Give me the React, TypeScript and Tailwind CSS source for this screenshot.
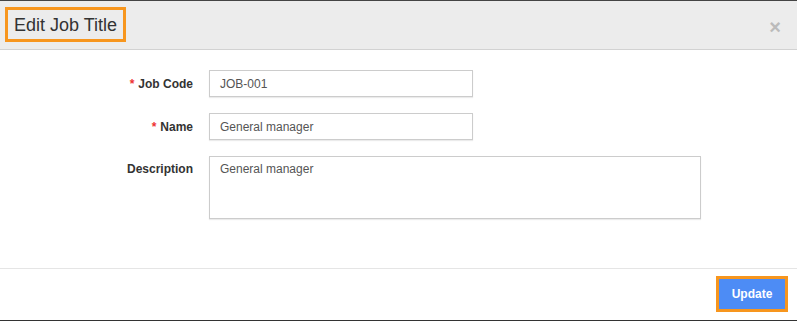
import React from "react";

export default function App() {
  return (
    <div className="w-[797px] h-[321px] bg-white flex flex-col overflow-hidden" style={{ fontFamily: "'Liberation Sans', Arial, sans-serif" }}>
      <div className="h-px bg-[#444]" />
      <div className="h-[49px] bg-[#ececec] border-b border-[#d2d2d2] flex items-start justify-between">
        <div className="mt-[6px] ml-[5px] h-[35px] pl-[6px] pr-[6px] border-[3px] border-[#f7961e] flex items-center">
          <span className="text-[18px] text-[#333] leading-none">Edit Job Title</span>
        </div>
        <div className="mt-[16px] mr-[16px] text-[#bbb] text-[20px] font-bold leading-none">×</div>
      </div>
      <div className="flex-1 flex flex-col gap-[16px] pt-[20px]">
        <div className="flex items-center">
          <div className="w-[193px] text-right text-[12px] font-bold text-[#333]"><span className="text-[#e33] mr-[4px]">*</span>Job Code</div>
          <div className="ml-[16px] w-[264px] h-[27px] border border-[#ccc] shadow-[0_1px_1px_rgba(0,0,0,0.08)] pl-[10px] flex items-center text-[12px] text-[#555]">JOB-001</div>
        </div>
        <div className="flex items-center">
          <div className="w-[193px] text-right text-[12px] font-bold text-[#333]"><span className="text-[#e33] mr-[4px]">*</span>Name</div>
          <div className="ml-[16px] w-[264px] h-[27px] border border-[#ccc] shadow-[0_1px_1px_rgba(0,0,0,0.08)] pl-[10px] flex items-center text-[12px] text-[#555]">General manager</div>
        </div>
        <div className="flex items-start">
          <div className="w-[193px] text-right text-[12px] font-bold text-[#333] pt-[4px]">Description</div>
          <div className="ml-[16px] w-[492px] h-[63px] border border-[#ccc] shadow-[0_1px_1px_rgba(0,0,0,0.08)] pl-[10px] pt-[3px] text-[12px] text-[#555]">General manager</div>
        </div>
      </div>
      <div className="h-[52px] border-t border-[#e5e5e5] flex items-start justify-end pr-[9px] pt-[7px]">
        <div className="w-[72px] h-[36px] border-[3px] border-[#f7961e] bg-[#4d8cf5] flex items-center justify-center text-white text-[12px] font-bold">Update</div>
      </div>
      <div className="h-px bg-[#333]" />
    </div>
  );
}
